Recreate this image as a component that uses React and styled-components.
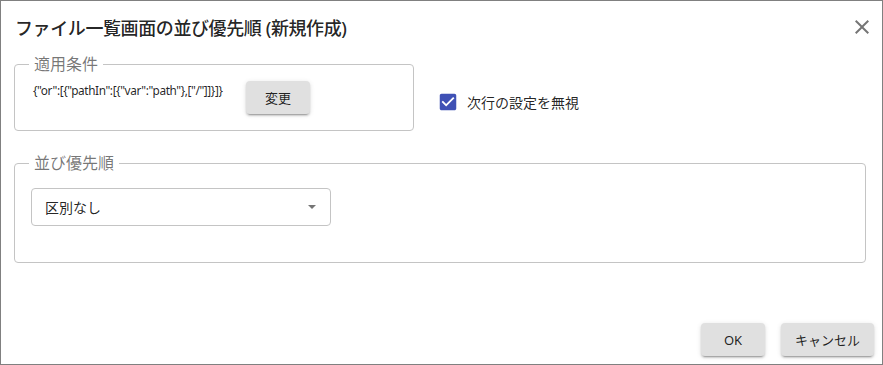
import React from "react";
import styled, { createGlobalStyle } from "styled-components";

const GlobalStyle = createGlobalStyle`
  html, body {
    margin: 0;
    padding: 0;
    background: #fff;
  }
  body {
    font-family: "Noto Sans", "Noto Sans CJK JP", sans-serif;
    color: rgba(0, 0, 0, 0.87);
  }
`;

const Dialog = styled.div`
  box-sizing: border-box;
  width: 883px;
  height: 365px;
  border: 1px solid #808080;
  background: #fff;
  display: flex;
  flex-direction: column;
`;

const Header = styled.div`
  display: flex;
  align-items: center;
  justify-content: space-between;
  padding: 11px 8px 0 14px;
  height: 30px;
`;

const Title = styled.h2`
  margin: 0;
  font-size: 18px;
  font-weight: 500;
  letter-spacing: -0.4px;
  color: rgba(0, 0, 0, 0.87);
`;

const CloseButton = styled.button`
  border: none;
  background: none;
  padding: 0;
  width: 24px;
  height: 24px;
  cursor: pointer;
  svg {
    display: block;
    fill: rgba(0, 0, 0, 0.54);
  }
`;

const Content = styled.div`
  flex: 1;
  padding: 13px 16px 0 13px;
  display: flex;
  flex-direction: column;
  gap: 23px;
`;

const TopRow = styled.div`
  display: flex;
  align-items: center;
  gap: 23px;
`;

const Group = styled.fieldset`
  box-sizing: border-box;
  margin: 0;
  width: ${props => props.width || "auto"};
  border: 1px solid #c4c4c4;
  border-radius: 4px;
  padding: 0 16px 16px 16px;

  legend {
    margin-left: -2px;
    padding: 0 5px;
    font-size: 16px;
    line-height: 19px;
    color: rgba(0, 0, 0, 0.54);
  }
`;

const ConditionRow = styled.div`
  display: flex;
  align-items: flex-start;
  gap: 17px;
  padding-top: 7px;
`;

const ConditionText = styled.span`
  margin: 1px 0 0 2px;
  font-size: 11.8px;
  line-height: 16px;
  letter-spacing: -0.4px;
  width: 196px;
  white-space: nowrap;
`;

const Button = styled.button`
  box-sizing: border-box;
  min-width: 64px;
  height: 33px;
  padding: 0 14px;
  border: none;
  border-radius: 4px;
  background: #e0e0e0;
  color: rgba(0, 0, 0, 0.87);
  font-family: "Noto Sans", "Noto Sans CJK JP", sans-serif;
  font-size: 13px;
  font-weight: 400;
  box-shadow: 0 3px 1px -2px rgba(0, 0, 0, 0.2), 0 2px 2px 0 rgba(0, 0, 0, 0.14),
    0 1px 5px 0 rgba(0, 0, 0, 0.12);
  cursor: pointer;
`;

const CheckLabel = styled.label`
  display: flex;
  align-items: center;
  gap: 8px;
  font-size: 14px;
  color: rgba(0, 0, 0, 0.87);
  margin-top: 18px;
  svg {
    display: block;
    fill: #3f51b5;
  }
`;

const Select = styled.div`
  box-sizing: border-box;
  width: 300px;
  height: 38px;
  margin-top: 15px;
  margin-bottom: 20px;
  border: 1px solid #c4c4c4;
  border-radius: 4px;
  padding: 0 13px 0 13px;
  display: flex;
  align-items: center;
  justify-content: space-between;
  font-size: 14px;
  color: rgba(0, 0, 0, 0.87);
`;

const Caret = styled.span`
  width: 0;
  height: 0;
  border-left: 4px solid transparent;
  border-right: 4px solid transparent;
  border-top: 4px solid rgba(0, 0, 0, 0.54);
  margin-right: 1px;
`;

const Footer = styled.div`
  display: flex;
  justify-content: flex-end;
  gap: 16px;
  padding: 8px;
`;

const App = () => {
  return (
    <>
      <GlobalStyle />
      <Dialog>
        <Header>
          <Title>ファイル一覧画面の並び優先順 (新規作成)</Title>
          <CloseButton aria-label="close">
            <svg width="24" height="24" viewBox="0 0 24 24">
              <path d="M19 6.41L17.59 5 12 10.59 6.41 5 5 6.41 10.59 12 5 17.59 6.41 19 12 13.41 17.59 19 19 17.59 13.41 12z" />
            </svg>
          </CloseButton>
        </Header>
        <Content>
          <TopRow>
            <Group width="400px">
              <legend>適用条件</legend>
              <ConditionRow>
                <ConditionText>{'{"or":[{"pathIn":[{"var":"path"},["/"]]}]}'}</ConditionText>
                <Button>変更</Button>
              </ConditionRow>
            </Group>
            <CheckLabel>
              <svg width="22" height="22" viewBox="0 0 24 24">
                <path d="M19 3H5c-1.11 0-2 .9-2 2v14c0 1.1.89 2 2 2h14c1.11 0 2-.9 2-2V5c0-1.1-.89-2-2-2zm-9 14l-5-5 1.41-1.41L10 14.17l7.59-7.59L19 8l-9 9z" />
              </svg>
              次行の設定を無視
            </CheckLabel>
          </TopRow>
          <Group>
            <legend>並び優先順</legend>
            <Select>
              区別なし
              <Caret />
            </Select>
          </Group>
        </Content>
        <Footer>
          <Button>OK</Button>
          <Button>キャンセル</Button>
        </Footer>
      </Dialog>
    </>
  );
};

export default App;
